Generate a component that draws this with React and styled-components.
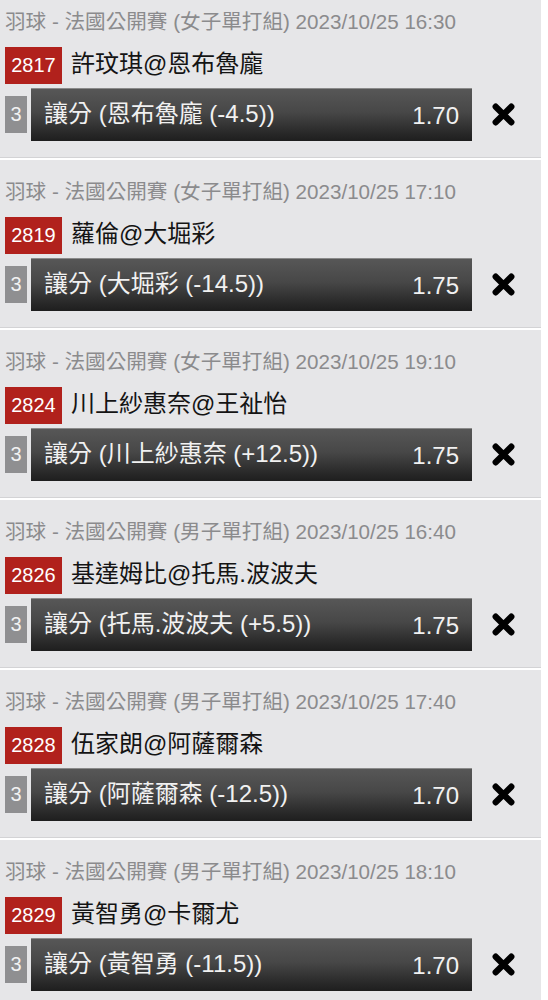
import styled, { createGlobalStyle } from "styled-components";

const GlobalStyle = createGlobalStyle`
  html, body {
    margin: 0;
    padding: 0;
    background: #ffffff;
    font-family: "Liberation Sans", "Noto Sans CJK TC", sans-serif;
  }
`;

const BetList = styled.div`
  width: 541px;
  margin-top: -10px;
  overflow: hidden;
`;

const BetCard = styled.div`
  background: #e6e6e8;
  padding-top: 10px;
  padding-bottom: 16px;
  border-bottom: 1px solid #d3d3d5;
  margin-bottom: 2px;
`;

const MatchHeader = styled.div`
  height: 44px;
  line-height: 44px;
  padding-left: 5px;
  font-size: 20.6px;
  color: #8b8b8d;
  white-space: nowrap;
`;

const MatchRow = styled.div`
  display: flex;
  align-items: center;
  gap: 9px;
  margin-top: 3px;
  padding-left: 5px;
  height: 37px;
`;

const MatchNo = styled.div`
  width: 57px;
  height: 37px;
  background: #b1211c;
  color: #ffffff;
  font-size: 20px;
  line-height: 37px;
  text-align: center;
`;

const Teams = styled.div`
  font-size: 24px;
  line-height: 31px;
  padding-bottom: 5px;
  color: #141414;
`;

const BetRow = styled.div`
  display: flex;
  align-items: center;
  margin-top: 4px;
  padding-left: 5px;
  height: 53px;
`;

const Leg = styled.div`
  width: 22px;
  height: 37px;
  background: #8f8f91;
  color: #f2f2f2;
  font-size: 20px;
  line-height: 37px;
  text-align: center;
  margin-right: 4px;
`;

const BetBar = styled.div`
  flex: 0 0 441px;
  box-sizing: border-box;
  height: 53px;
  display: flex;
  align-items: center;
  justify-content: space-between;
  padding: 0 13px 2px 13px;
  background: linear-gradient(#575757, #474747 45%, #2c2c2c 80%, #1e1e1e);
  border-top: 1px solid #8a8a8a;
  color: #f1f1f1;
  font-size: 24px;
  line-height: 24px;
  white-space: nowrap;
`;

const Pick = styled.span``;

const Odds = styled.span`
  padding-top: 3px;
`;

const RemoveButton = styled.button`
  flex: 0 0 62px;
  height: 53px;
  display: flex;
  align-items: center;
  justify-content: center;
  border: 0;
  background: transparent;
  padding: 0;
  cursor: pointer;
`;

function CrossIcon() {
  return (
    <svg width="25" height="25" viewBox="0 0 24 24">
      <path
        d="M4.5 4.5 L19.5 19.5 M19.5 4.5 L4.5 19.5"
        stroke="#000"
        strokeWidth="6"
        strokeLinecap="round"
        fill="none"
      />
    </svg>
  );
}

const bets = [
  {
    group: "女子單打組",
    time: "2023/10/25 16:30",
    no: "2817",
    teams: "許玟琪@恩布魯龐",
    pick: "讓分 (恩布魯龐 (-4.5))",
    odds: "1.70",
  },
  {
    group: "女子單打組",
    time: "2023/10/25 17:10",
    no: "2819",
    teams: "蘿倫@大堀彩",
    pick: "讓分 (大堀彩 (-14.5))",
    odds: "1.75",
  },
  {
    group: "女子單打組",
    time: "2023/10/25 19:10",
    no: "2824",
    teams: "川上紗惠奈@王祉怡",
    pick: "讓分 (川上紗惠奈 (+12.5))",
    odds: "1.75",
  },
  {
    group: "男子單打組",
    time: "2023/10/25 16:40",
    no: "2826",
    teams: "基達姆比@托馬.波波夫",
    pick: "讓分 (托馬.波波夫 (+5.5))",
    odds: "1.75",
  },
  {
    group: "男子單打組",
    time: "2023/10/25 17:40",
    no: "2828",
    teams: "伍家朗@阿薩爾森",
    pick: "讓分 (阿薩爾森 (-12.5))",
    odds: "1.70",
  },
  {
    group: "男子單打組",
    time: "2023/10/25 18:10",
    no: "2829",
    teams: "黃智勇@卡爾尤",
    pick: "讓分 (黃智勇 (-11.5))",
    odds: "1.70",
  },
];

export default function App() {
  return (
    <>
      <GlobalStyle />
      <BetList>
        {bets.map((b) => (
          <BetCard key={b.no}>
            <MatchHeader>
              羽球 - 法國公開賽 ({b.group}) {b.time}
            </MatchHeader>
            <MatchRow>
              <MatchNo>{b.no}</MatchNo>
              <Teams>{b.teams}</Teams>
            </MatchRow>
            <BetRow>
              <Leg>3</Leg>
              <BetBar>
                <Pick>{b.pick}</Pick>
                <Odds>{b.odds}</Odds>
              </BetBar>
              <RemoveButton aria-label="remove">
                <CrossIcon />
              </RemoveButton>
            </BetRow>
          </BetCard>
        ))}
      </BetList>
    </>
  );
}
